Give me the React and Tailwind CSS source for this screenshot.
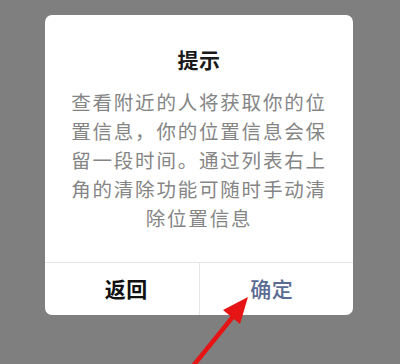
const cjk = { fontFamily: '"Noto Sans CJK SC", "Noto Sans", sans-serif' };

export default function App() {
  return (
    <div className="relative w-[400px] h-[364px] bg-[#7f7f7f] overflow-hidden" style={cjk}>
      <div className="absolute left-[45px] top-[15px] w-[308px] bg-white rounded-[7px] flex flex-col">
        <div className="pt-[30px] text-center text-[21px] leading-[28px] font-bold text-[#1a1a1a] tracking-[0.5px]">
          提示
        </div>
        <p className="mt-[14px] px-[24px] pb-[30px] text-center text-[19.5px] leading-[29px] tracking-[1.8px] text-[#858585]">
          查看附近的人将获取你的位置信息，你的位置信息会保留一段时间。通过列表右上角的清除功能可随时手动清除位置信息
        </p>
        <div className="flex h-[53px] border-t border-[#e6e6e6]">
          <button className="flex-1 flex items-center justify-center pl-[9px] text-[21px] font-bold text-[#111] tracking-[0.5px]">
            返回
          </button>
          <button className="flex-1 flex items-center justify-center pr-[9px] border-l border-[#e6e6e6] text-[21px] font-medium text-[#5a6b94] tracking-[0.5px]">
            确定
          </button>
        </div>
      </div>
      <svg className="absolute inset-0" width="400" height="364" viewBox="0 0 400 364">
        <line x1="193" y1="366" x2="236" y2="313" stroke="#e61414" strokeWidth="4.5" strokeLinecap="round" />
        <polygon points="248,297 223,310 240,324" fill="#e61414" />
      </svg>
    </div>
  );
}
